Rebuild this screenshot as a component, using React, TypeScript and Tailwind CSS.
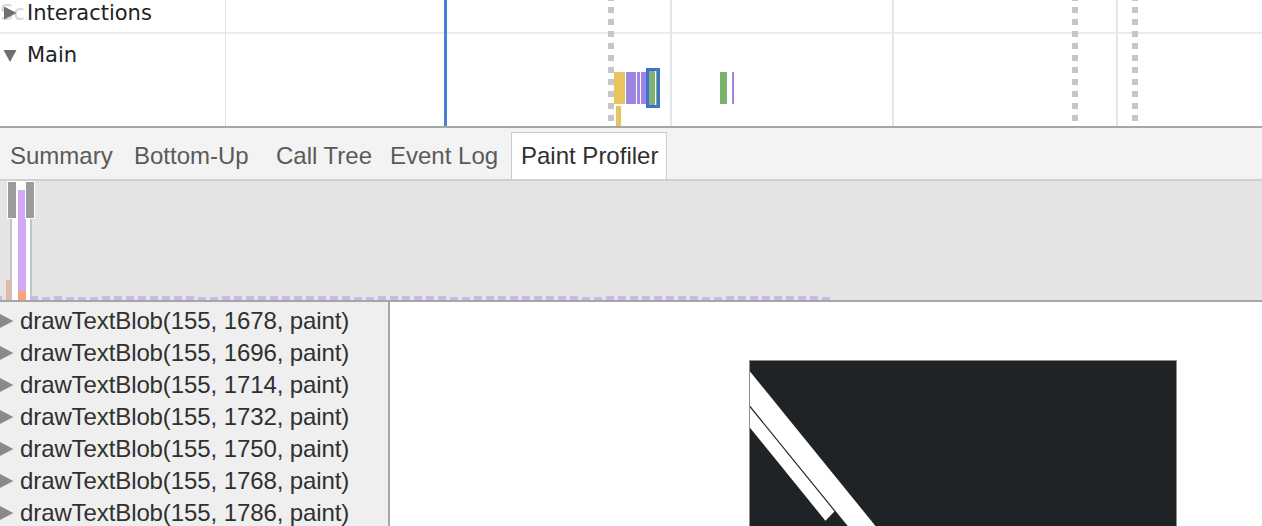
import type { ReactNode } from 'react'

const tabs = [
  { label: 'Summary', w: 'w-[124px]' },
  { label: 'Bottom-Up', w: 'w-[142px]' },
  { label: 'Call Tree', w: 'w-[114px]' },
  { label: 'Event Log', w: 'w-[131px]' },
]

const paintOps = [1678, 1696, 1714, 1732, 1750, 1768, 1786]

// heights of the tiny bars along the bottom of the overview
const barHeights = [
  4, 3, 4, 3, 3, 3, 4, 4, 4, 4, 4, 4, 4, 4, 3, 3, 4, 4, 4, 4, 4, 4, 4, 4, 4, 4, 4, 3, 3, 4, 4, 4, 4, 4, 4, 3, 3, 4,
  4, 4, 4, 4, 4, 4, 4, 4, 3, 3, 4, 4, 4, 4, 4, 4, 4, 4, 3, 3, 4, 4, 4, 4, 4, 4, 4, 4, 3,
]

const RightTri = ({ className, size = 14 }: { className?: string; size?: number }) => (
  <svg width={size} height={size} viewBox="0 0 14 14" className={className}>
    <path d="M1 0.5 L13.5 7 L1 13.5 Z" fill="currentColor" />
  </svg>
)

const DownTri = ({ className }: { className?: string }) => (
  <svg width="14" height="14" viewBox="0 0 14 14" className={className}>
    <path d="M0.5 1 L13.5 1 L7 13 Z" fill="currentColor" />
  </svg>
)

const VLine = ({ className }: { className: string }) => <div className={`absolute top-0 h-[126px] ${className}`} />

const Dotted = ({ className }: { className: string }) => (
  <div
    className={`absolute top-[-5px] h-[131px] w-[6px] bg-[repeating-linear-gradient(to_bottom,#c6c6c6_0px,#c6c6c6_6px,transparent_6px,transparent_12px)] ${className}`}
  />
)

const Block = ({ className, children }: { className: string; children?: ReactNode }) => (
  <div className={`absolute ${className}`}>{children}</div>
)

export default function App() {
  return (
    <div className="w-[1262px] h-[526px] overflow-hidden bg-white flex flex-col font-['Liberation_Sans',Arial,sans-serif]">
      {/* Timeline tracks */}
      <div className="relative h-[128px] shrink-0 border-b-2 border-[#a6a6a6] font-['DejaVu_Sans',sans-serif] text-[21px] text-[#222222]">
        <div className="relative h-[34px] border-b-2 border-[#ececec] flex items-start pt-[1px]">
          <span className="absolute left-0 top-[1px] leading-[25px] text-[#d6d6d6]">Sc</span>
          <RightTri className="relative ml-[3px] mt-[5px] text-[#6f6f6f]" />
          <span className="relative ml-[10px] leading-[25px]">Interactions</span>
        </div>
        <div className="flex items-start pt-[9px]">
          <DownTri className="ml-[3px] mt-[6px] text-[#6f6f6f]" />
          <span className="ml-[10px] leading-[25px]">Main</span>
        </div>

        {/* grid */}
        <VLine className="left-[225px] w-px bg-[#e2e2e2]" />
        <VLine className="left-[670px] w-[2px] bg-[#e6e6e6]" />
        <VLine className="left-[892px] w-[2px] bg-[#e6e6e6]" />
        <VLine className="left-[1116px] w-[2px] bg-[#e6e6e6]" />
        <Dotted className="left-[608px]" />
        <Dotted className="left-[1072px]" />
        <Dotted className="left-[1132px]" />
        <VLine className="left-[444px] w-[3px] bg-[#4a7fd6]" />

        {/* flame chart */}
        <Block className="left-[614px] top-[68px] flex items-start gap-px">
          <div className="mt-[4px] w-[11px] h-[32px] bg-[#e9c35e]" />
          <div className="mt-[4px] w-[10px] h-[32px] bg-[#9c86e2]" />
          <div className="mt-[4px] w-[3px] h-[32px] bg-[#9c86e2]" />
          <div className="mt-[4px] w-[5px] h-[32px] bg-[#9c86e2] -mr-px" />
          <div className="w-[14px] h-[40px] border-[3px] border-[#3d72d4] bg-[#7bb26c] flex justify-end pr-[1px]">
            <div className="w-px h-full bg-white" />
          </div>
        </Block>
        <Block className="left-[616px] top-[106px] w-[5px] h-[20px] bg-[#e9c35e]" />
        <Block className="left-[720px] top-[72px] flex items-start gap-[5px]">
          <div className="w-[7px] h-[32px] bg-[#7bb26c]" />
          <div className="w-[1.5px] h-[32px] bg-[#9c86e2]" />
        </Block>
      </div>

      {/* Tabs */}
      <div className="h-[53px] shrink-0 bg-[#f3f3f3] border-b-2 border-[#d0d0d0] flex items-end text-[24px]">
        {tabs.map((t) => (
          <div key={t.label} className={`${t.w} h-[47px] flex items-center pl-[10px] text-[#5a5a5a] whitespace-nowrap`}>
            {t.label}
          </div>
        ))}
        <div className="w-[156px] h-[47px] flex items-center pl-[9px] bg-white border border-b-0 border-[#cccccc] text-[#303030] whitespace-nowrap">
          Paint Profiler
        </div>
      </div>

      {/* Paint overview */}
      <div className="relative h-[121px] shrink-0 bg-[#e4e4e4] border-b-2 border-[#a6a6a6]">
        <Block className="left-[6px] bottom-0 w-[8px] h-[20px] bg-[#e6b6a2]" />
        <Block className="left-[0px] bottom-0 w-[2px] h-[4px] bg-[#cbb9e4]" />
        <Block className="left-[12px] top-0 w-[18px] h-[119px] bg-white" />
        <Block className="left-[10px] top-[37px] w-[2px] h-[82px] bg-[#c4c4c4]" />
        <Block className="left-[30px] top-[37px] w-[2px] h-[82px] bg-[#c4c4c4]" />
        <Block className="left-[18px] top-[9px] w-[8px] h-[110px] flex flex-col">
          <div className="flex-1 bg-[#d2a9f7]" />
          <div className="h-[9px] bg-[#f6a47e]" />
        </Block>
        <Block className="left-[7px] top-0 flex gap-[8px]">
          <div className="w-[10px] h-[38px] bg-[#9b9b9b] border border-white" />
          <div className="w-[10px] h-[38px] bg-[#9b9b9b] border border-white" />
        </Block>
        <div className="absolute left-[30px] bottom-0 flex items-end gap-[4px]">
          {barHeights.map((h, i) => (
            <div key={i} className="w-[8px] bg-[#cbb9e4]" style={{ height: h }} />
          ))}
        </div>
      </div>

      {/* Bottom panes */}
      <div className="flex-1 flex min-h-0">
        <div className="w-[390px] shrink-0 bg-[#efefef] border-r-2 border-[#a6a6a6] pt-[3px] text-[24px] tracking-[-0.1px] text-[#303030]">
          {paintOps.map((y) => (
            <div key={y} className="h-[32px] flex items-center whitespace-nowrap">
              <RightTri size={16} className="shrink-0 ml-[-2px] text-[#8a8a8a]" />
              <span className="ml-[6px] leading-[32px]">drawTextBlob(155, {y}, paint)</span>
            </div>
          ))}
        </div>
        <div className="flex-1 bg-white pl-[359px] pt-[58px]">
          <div className="w-[428px] h-[300px] border border-[#8e8e8e] bg-[#202326] overflow-hidden">
            <svg width="426" height="298" viewBox="0 0 426 298">
              <polygon points="0,10.5 153.9,200 126.2,200 0,44.6" fill="#ffffff" />
              <polygon points="0,46.5 84.4,150.4 75.4,159.7 0,66.8" fill="#ffffff" />
            </svg>
          </div>
        </div>
      </div>
    </div>
  )
}
